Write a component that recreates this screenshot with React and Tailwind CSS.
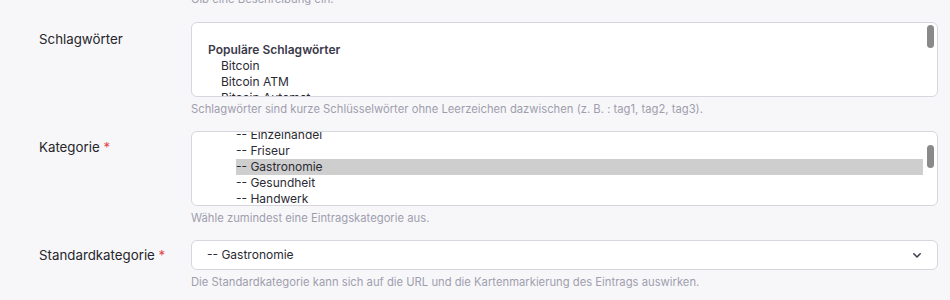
import React from "react";

const font = { fontFamily: "Inter, 'Noto Sans', sans-serif" };

function Scrollbar({ top }) {
  return (
    <div
      className={`absolute right-[3px] w-[7px] h-[23px] rounded-full bg-[#8a8a8a] ${top}`}
    />
  );
}

function Help({ children }) {
  return (
    <p className="mt-[4px] text-[11.25px] leading-[16px] text-[#a09eae]">{children}</p>
  );
}

function Row({ label, required, children, labelPad }) {
  return (
    <div className="grid grid-cols-[152px_1fr] pl-[39px] pr-[12px]">
      <div className={`text-[13.3px] leading-[20px] text-[#26252b] ${labelPad}`}>
        {label}
        {required && <span className="text-[#e5484d]"> *</span>}
      </div>
      <div>{children}</div>
    </div>
  );
}

export default function App() {
  return (
    <div className="w-[950px] h-[300px] overflow-hidden bg-[#f7f7f9]" style={font}>
      <div className="-mt-[9px]">
        <div className="grid grid-cols-[152px_1fr] pl-[39px] pr-[12px]">
          <div />
          <p className="text-[11.25px] leading-[16px] text-[#a09eae]">Gib eine Beschreibung ein.</p>
        </div>

        <div className="mt-[15px]">
          <Row label="Schlagwörter" labelPad="pt-[7px]">
            <div className="relative h-[75px] rounded-[6px] border border-[#d7d6de] bg-white overflow-hidden">
              <div className="pt-[19px] text-[12px] leading-[16px] text-[#2b2a33]">
                <div className="pl-[16px] font-semibold text-[#3b3a4a]">Populäre Schlagwörter</div>
                <div className="pl-[29px]">Bitcoin</div>
                <div className="pl-[29px]">Bitcoin ATM</div>
                <div className="pl-[29px]">Bitcoin Automat</div>
              </div>
              <Scrollbar top="top-[2px]" />
            </div>
            <Help>
              Schlagwörter sind kurze Schlüsselwörter ohne Leerzeichen dazwischen (z. B. : tag1, tag2, tag3).
            </Help>
          </Row>
        </div>

        <div className="mt-[14px]">
          <Row label="Kategorie" required labelPad="pt-[6px]">
            <div className="relative h-[75px] rounded-[6px] border border-[#d7d6de] bg-white overflow-hidden">
              <div className="-mt-[5px] pl-[44px] pr-[14px] text-[12px] leading-[16px] text-[#2b2a33]">
                <div>-- Einzelhandel</div>
                <div>-- Friseur</div>
                <div className="bg-[#cecece]">-- Gastronomie</div>
                <div>-- Gesundheit</div>
                <div>-- Handwerk</div>
              </div>
              <Scrollbar top="top-[13px]" />
            </div>
            <Help>Wähle zumindest eine Eintragskategorie aus.</Help>
          </Row>
        </div>

        <div className="mt-[14px]">
          <Row label="Standardkategorie" required labelPad="pt-[5px]">
            <div className="flex h-[30px] items-center justify-between rounded-[6px] border border-[#d7d6de] bg-white pl-[15px] pr-[16px] text-[12px] text-[#2b2a33]">
              <span>-- Gastronomie</span>
              <svg width="8" height="5" viewBox="0 0 8 5" fill="none">
                <path d="M0.8 0.8 L4 4 L7.2 0.8" stroke="#3b3950" strokeWidth="1.5" strokeLinecap="round" strokeLinejoin="round" />
              </svg>
            </div>
            <Help>Die Standardkategorie kann sich auf die URL und die Kartenmarkierung des Eintrags auswirken.</Help>
          </Row>
        </div>
      </div>
    </div>
  );
}
